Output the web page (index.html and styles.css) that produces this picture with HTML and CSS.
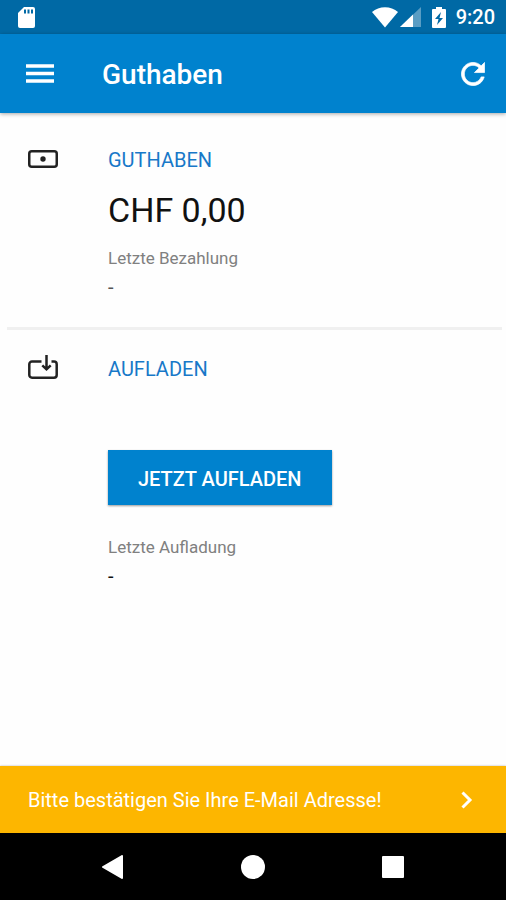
FILE: index.html
```html
<!DOCTYPE html>
<html lang="de">
<head>
<meta charset="utf-8">
<meta name="viewport" content="width=device-width, initial-scale=1">
<title>Guthaben</title>
<link rel="stylesheet" href="styles.css">
</head>
<body>
<div class="status-bar">
  <svg class="sd-icon" width="17" height="21" viewBox="0 0 17 21" aria-hidden="true">
    <path fill="#fff" d="M6 0h9a2 2 0 0 1 2 2v17a2 2 0 0 1-2 2H2a2 2 0 0 1-2-2V6z"/>
    <path stroke="#0069a5" stroke-width="2" d="M7 2.500v4M10.500 2.500v4M14 2.500v4"/>
  </svg>
  <div class="status-right">
    <svg width="26" height="21" viewBox="0 0 26 21" aria-hidden="true">
      <path fill="#fff" d="M0 5C7-1.500 19-1.500 26 5L13 20.500z"/>
    </svg>
    <svg class="signal-icon" width="21" height="20" viewBox="0 0 21 20" aria-hidden="true">
      <path fill="#fff" fill-opacity=".35" d="M21 0v20H0z"/>
      <path fill="#fff" d="M13 7.600V20H0z"/>
    </svg>
    <svg class="battery-icon" width="14" height="21" viewBox="0 0 14 21" aria-hidden="true">
      <path fill="#fff" d="M4 0h6v2h3a1 1 0 0 1 1 1v17a1 1 0 0 1-1 1H1a1 1 0 0 1-1-1V3a1 1 0 0 1 1-1h3z"/>
      <path fill="#0069a5" d="M9 5l-6 7h3.500L5 18l6-7H7.500z"/>
    </svg>
    <span class="clock">9:20</span>
  </div>
</div>

<header class="app-bar">
  <button class="icon-button" type="button" aria-label="Menü">
    <svg width="28" height="20" viewBox="0 0 28 20" aria-hidden="true">
      <path stroke="#fff" stroke-width="3.500" d="M0 2h28M0 9.500h28M0 17h28"/>
    </svg>
  </button>
  <h1 class="title">Guthaben</h1>
  <button class="icon-button" type="button" aria-label="Aktualisieren">
    <svg width="24" height="24" viewBox="3.700 3.700 16.600 16.600" aria-hidden="true">
      <path fill="#fff" stroke="#fff" stroke-width=".5" d="M17.650 6.350C16.200 4.900 14.210 4 12 4c-4.420 0-7.990 3.580-7.990 8s3.570 8 7.990 8c3.730 0 6.840-2.550 7.730-6h-2.080c-.82 2.330-3.040 4-5.650 4-3.310 0-6-2.690-6-6s2.690-6 6-6c1.660 0 3.140.69 4.220 1.780L13 11h7V4z"/>
    </svg>
  </button>
</header>

<main class="content">
  <section class="card">
    <svg class="card-icon" width="30" height="18" viewBox="0 0 30 18" aria-hidden="true">
      <rect x="1.250" y="1.250" width="27.500" height="15.500" rx="2.500" fill="none" stroke="#222" stroke-width="2.500"/>
      <circle cx="15" cy="9" r="2.700" fill="#222"/>
    </svg>
    <div class="card-body">
      <h2 class="heading">GUTHABEN</h2>
      <p class="amount">CHF 0,00</p>
      <p class="label">Letzte Bezahlung</p>
      <p class="value muted">-</p>
    </div>
  </section>
  <hr class="divider">
  <section class="card top-up">
    <svg class="card-icon" width="30" height="24" viewBox="0 0 30 24" aria-hidden="true">
      <path fill="none" stroke="#222" stroke-width="2.500" d="M13.500 6.500H4A2.700 2.700 0 0 0 1.300 9.200V20A2.700 2.700 0 0 0 4 22.700H26A2.700 2.700 0 0 0 28.700 20V9.200A2.700 2.700 0 0 0 26 6.500H23.500M18.500 0V14M14.300 10.300L18.500 14.300L22.700 10.300"/>
    </svg>
    <div class="card-body">
      <h2 class="heading">AUFLADEN</h2>
      <button class="primary" type="button">JETZT AUFLADEN</button>
      <p class="label">Letzte Aufladung</p>
      <p class="value">-</p>
    </div>
  </section>
</main>

<a class="notice" href="#email">
  <span>Bitte bestätigen Sie Ihre E-Mail Adresse!</span>
  <svg width="12" height="18" viewBox="0 0 12 18" aria-hidden="true">
    <path fill="none" stroke="#fff" stroke-width="3" d="M1.500 1.500L9 9L1.500 16.500"/>
  </svg>
</a>

<nav class="nav-bar" aria-label="Systemnavigation">
  <button class="nav-button" type="button" aria-label="Zurück">
    <svg width="24" height="24" viewBox="0 0 24 24" aria-hidden="true"><path fill="#fff" stroke="#fff" stroke-width="2" stroke-linejoin="round" d="M21 1V23L2 12z"/></svg>
  </button>
  <button class="nav-button" type="button" aria-label="Startseite">
    <svg width="24" height="24" viewBox="0 0 24 24" aria-hidden="true"><circle cx="12" cy="12" r="12" fill="#fff"/></svg>
  </button>
  <button class="nav-button" type="button" aria-label="Übersicht">
    <svg width="24" height="24" viewBox="0 0 24 24" aria-hidden="true"><rect x="1" y="1" width="22" height="22" rx="1" fill="#fff"/></svg>
  </button>
</nav>
</body>
</html>
```
FILE: styles.css
```css
* {
  box-sizing: border-box;
}

body {
  margin: 0;
  min-height: 100vh;
  display: flex;
  flex-direction: column;
  background: #fefefe;
  color: #111;
  font-family: Roboto, "Liberation Sans", sans-serif;
}

h1, h2, p {
  margin: 0;
}

button {
  border: 0;
  padding: 0;
  background: none;
  color: inherit;
  font: inherit;
}

svg {
  display: block;
  flex: none;
}

.status-bar {
  display: flex;
  align-items: center;
  justify-content: space-between;
  padding: 5px 11px 5px 18px;
  background: #0069a5;
  color: #fff;
}

.status-right {
  display: flex;
  align-items: center;
}

.signal-icon {
  margin-left: 2px;
}

.battery-icon {
  margin-left: 11px;
}

.clock {
  margin-left: 10px;
  font-size: 20px;
  line-height: 24px;
  font-weight: 500;
}

.app-bar {
  position: relative;
  display: flex;
  align-items: center;
  padding: 16px 21px 15px 26px;
  background: #0082ce;
  color: #fff;
  box-shadow: 0 1px 4px rgba(0, 0, 0, 0.35);
}

.title {
  flex: 1;
  margin-left: 48px;
  padding-top: 2px;
  font-size: 28px;
  line-height: 46px;
  font-weight: 500;
}

.content {
  flex: 1;
}

.card {
  display: grid;
  grid-template-columns: 80px 1fr;
  padding: 33px 28px 26px;
}

.card-icon {
  margin-top: 4px;
}

.card-body {
  display: flex;
  flex-direction: column;
  align-items: flex-start;
}

.heading {
  color: #1878c8;
  font-size: 20px;
  line-height: 28px;
  font-weight: 400;
}

.amount {
  margin-top: 16px;
  font-size: 34px;
  line-height: 40px;
}

.label {
  margin-top: 16px;
  color: #808080;
  font-size: 17px;
  line-height: 24px;
}

.value {
  margin-top: 3px;
  font-size: 20px;
  line-height: 28px;
}

.value.muted {
  color: #555;
}

.divider {
  width: auto;
  height: 3px;
  margin: 0 4px 0 7px;
  border: 0;
  background: #f0f0f0;
}

.top-up {
  padding-top: 25px;
}

.top-up .card-icon {
  margin-top: 0;
}

.primary {
  margin: 67px 0 14px;
  padding: 15px 30px 12px;
  background: #0082ce;
  color: #fff;
  font-size: 20px;
  line-height: 28px;
  font-weight: 500;
  box-shadow: 0 1px 2px rgba(0, 0, 0, 0.4);
}

.notice {
  display: flex;
  align-items: center;
  justify-content: space-between;
  padding: 20px 33px 19px 28px;
  background: #fdb600;
  color: #fff;
  font-size: 20px;
  line-height: 28px;
  text-decoration: none;
  box-shadow: 0 0 2px rgba(0, 0, 0, 0.3);
}

.nav-bar {
  position: relative;
  display: flex;
  justify-content: center;
  gap: 92px;
  padding: 10px 0 9px;
  background: #000;
}

.nav-button {
  display: grid;
  place-items: center;
  width: 48px;
  height: 48px;
}
```
